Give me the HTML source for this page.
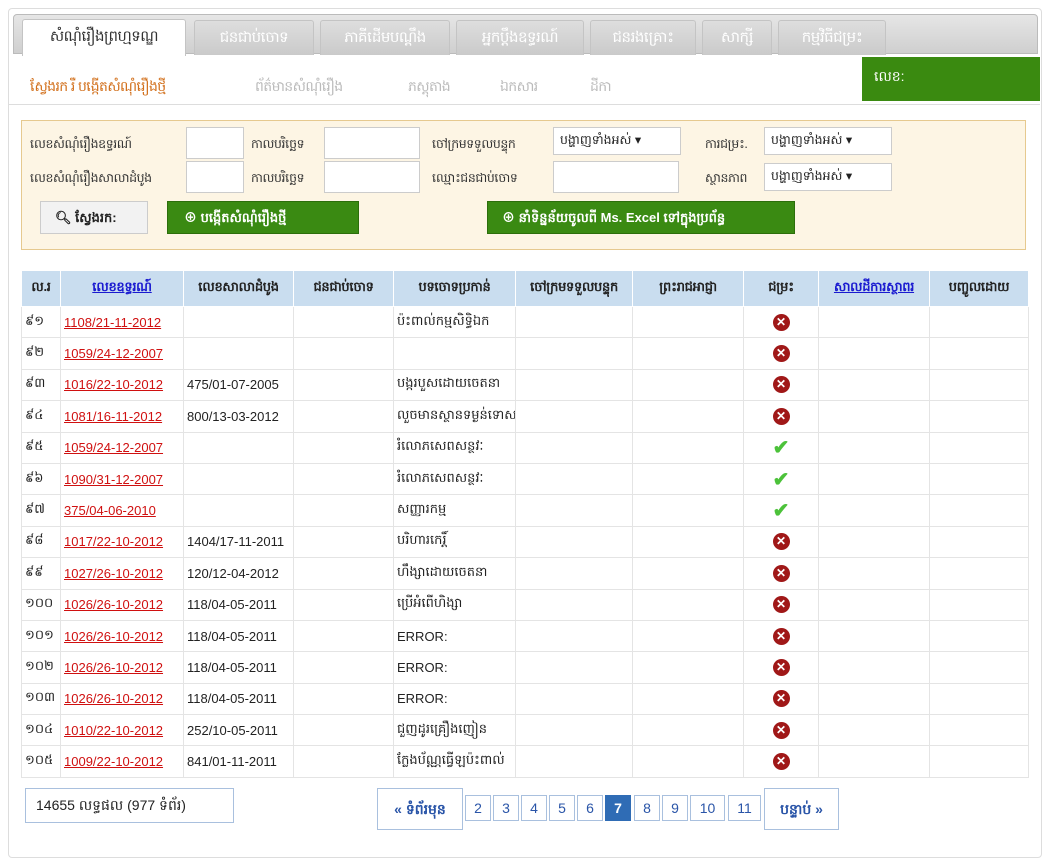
<!DOCTYPE html>
<html><head><meta charset="utf-8"><style>
*{box-sizing:border-box;margin:0;padding:0}
body{width:1046px;height:842px;background:#fff;font-family:"Liberation Sans","Noto Sans CJK SC",sans-serif;font-size:13px;color:#222;position:relative;overflow:hidden}
.abs{position:absolute}
.frame{left:8px;top:8px;width:1034px;height:850px;border:1px solid #ddd;border-radius:4px}
.tabbar{left:13px;top:14px;width:1025px;height:40px;background:linear-gradient(#e6e6e6,#cfcfcf);border:1px solid #bbb;border-radius:4px 4px 0 0}
.tab{position:absolute;top:5px;height:35px;background:linear-gradient(#dedede,#cacaca);border:1px solid #c4c4c4;border-bottom:none;color:#fff;font-size:15px;line-height:33px;text-align:center;border-radius:3px 3px 0 0;letter-spacing:-0.5px}
.tab.on{background:#fff;color:#333;top:4px;height:37px}
.sub{top:77px;font-size:14px;color:#bbb;letter-spacing:-0.6px;white-space:nowrap}
.green{left:862px;top:57px;width:178px;height:44px;background:#3a8a10;color:#fff;padding:10px 12px;font-size:14px}
.filter{left:21px;top:120px;width:1005px;height:130px;background:#fdf5e4;border:1px solid #e6c98f}
.lbl{font-size:12.5px;color:#333;letter-spacing:-0.4px;white-space:nowrap}
.in{background:#fff;border:1px solid #ccc;height:32px}
.sel{background:#fff;border:1px solid #ccc;height:28px;font-size:12.5px;padding:4px 6px;white-space:nowrap}
.btn{height:33px;background:#3a8a12;border:1px solid #2c6e0b;color:#fff;font-size:13px;font-weight:bold;line-height:31px;white-space:nowrap}
table{position:absolute;left:21px;top:270px;border-collapse:collapse;table-layout:fixed;width:1007px}
th{background:#c9ddef;height:36px;font-size:13px;border:1px solid #fff;font-weight:bold;color:#222;letter-spacing:-0.3px}
th a{color:#1a1ad0}
td{height:31.4px;border:1px solid #e4e4e4;font-size:13px;white-space:nowrap;overflow:hidden;padding:0 3px}
td a{color:#d01010;text-decoration:underline}
.x{display:inline-block;width:17px;height:17px;border-radius:50%;background:#a01818;color:#fff;font-size:12px;line-height:17px;font-weight:bold;text-align:center}
.ok{color:#4cc23a;font-size:20px;font-weight:bold}
.pg{position:absolute;top:795px;height:26px;border:1px solid #a9c0de;color:#2a55a8;font-size:14px;text-align:center;line-height:24px}
</style></head><body>
<div class="abs frame"></div>
<div class="abs tabbar">
<div class="tab on" style="left:8px;width:164px">សំណុំរឿងព្រហ្មទណ្ឌ</div>
<div class="tab" style="left:180px;width:120px">ជនជាប់ចោទ</div>
<div class="tab" style="left:306px;width:130px">ភាគីដើមបណ្តឹង</div>
<div class="tab" style="left:442px;width:128px">អ្នកប្តឹងឧទ្ធរណ៍</div>
<div class="tab" style="left:576px;width:106px">ជនរងគ្រោះ</div>
<div class="tab" style="left:688px;width:70px">សាក្សី</div>
<div class="tab" style="left:764px;width:108px">កម្មវិធីជម្រះ</div>
</div>
<div class="abs sub" style="left:30px;color:#d2701c">ស្វែងរក រឺ បង្កើតសំណុំរឿងថ្មី</div>
<div class="abs sub" style="left:255px">ព័ត៌មានសំណុំរឿង</div>
<div class="abs sub" style="left:408px">ភស្តុតាង</div>
<div class="abs sub" style="left:500px">ឯកសារ</div>
<div class="abs sub" style="left:590px">ដីកា</div>
<div class="abs" style="left:8px;top:104px;width:1032px;border-top:1px solid #ddd"></div>
<div class="abs green">លេខ:</div>
<div class="abs filter">
<div class="abs lbl" style="left:8px;top:16px">លេខសំណុំរឿងឧទ្ធរណ៍</div>
<div class="abs in" style="left:164px;top:6px;width:58px"></div>
<div class="abs lbl" style="left:229px;top:16px">កាលបរិច្ឆេទ</div>
<div class="abs in" style="left:302px;top:6px;width:96px"></div>
<div class="abs lbl" style="left:410px;top:16px">ចៅក្រមទទួលបន្ទុក</div>
<div class="abs sel" style="left:531px;top:6px;width:128px">បង្ហាញទាំងអស់ ▾</div>
<div class="abs lbl" style="left:683px;top:16px">ការជម្រះ.</div>
<div class="abs sel" style="left:742px;top:6px;width:128px">បង្ហាញទាំងអស់ ▾</div>
<div class="abs lbl" style="left:8px;top:50px">លេខសំណុំរឿងសាលាដំបូង</div>
<div class="abs in" style="left:164px;top:40px;width:58px"></div>
<div class="abs lbl" style="left:229px;top:50px">កាលបរិច្ឆេទ</div>
<div class="abs in" style="left:302px;top:40px;width:96px"></div>
<div class="abs lbl" style="left:410px;top:50px">ឈ្មោះជនជាប់ចោទ</div>
<div class="abs in" style="left:531px;top:40px;width:126px"></div>
<div class="abs lbl" style="left:683px;top:50px">ស្ថានភាព</div>
<div class="abs sel" style="left:742px;top:42px;width:128px">បង្ហាញទាំងអស់ ▾</div>
<div class="abs" style="left:18px;top:80px;width:108px;height:33px;background:#f2f2f2;border:1px solid #ccc;line-height:31px;padding-left:14px;font-size:13px;font-weight:bold">&#x1F50D;&#xFE0E; ស្វែងរក:</div>
<div class="abs btn" style="left:145px;top:80px;width:192px;padding-left:16px">⊕ បង្កើតសំណុំរឿងថ្មី</div>
<div class="abs btn" style="left:465px;top:80px;width:308px;padding-left:14px">⊕ នាំទិន្នន័យចូលពី Ms. Excel ទៅក្នុងប្រព័ន្ធ</div>
</div>
<table>
<colgroup><col style="width:39px"><col style="width:123px"><col style="width:110px"><col style="width:100px"><col style="width:122px"><col style="width:117px"><col style="width:111px"><col style="width:75px"><col style="width:111px"><col style="width:99px"></colgroup>
<tr><th>ល.រ</th><th><a href="#">លេខឧទ្ធរណ៍</a></th><th>លេខសាលាដំបូង</th><th>ជនជាប់ចោទ</th><th>បទចោទប្រកាន់</th><th>ចៅក្រមទទួលបន្ទុក</th><th>ព្រះរាជអាជ្ញា</th><th>ជម្រះ</th><th><a href="#">សាលដីការស្ថាពរ</a></th><th>បញ្ចូលដោយ</th></tr>
<tr><td>៩១</td><td><a>1108/21-11-2012</a></td><td></td><td></td><td>ប៉ះពាល់កម្មសិទ្ធិឯក</td><td></td><td></td><td align=center><span class="x">✕</span></td><td></td><td></td></tr>
<tr><td>៩២</td><td><a>1059/24-12-2007</a></td><td></td><td></td><td></td><td></td><td></td><td align=center><span class="x">✕</span></td><td></td><td></td></tr>
<tr><td>៩៣</td><td><a>1016/22-10-2012</a></td><td>475/01-07-2005</td><td></td><td>បង្ករបួសដោយចេតនា</td><td></td><td></td><td align=center><span class="x">✕</span></td><td></td><td></td></tr>
<tr><td>៩៤</td><td><a>1081/16-11-2012</a></td><td>800/13-03-2012</td><td></td><td>លួចមានស្ថានទម្ងន់ទោស</td><td></td><td></td><td align=center><span class="x">✕</span></td><td></td><td></td></tr>
<tr><td>៩៥</td><td><a>1059/24-12-2007</a></td><td></td><td></td><td>រំលោភសេពសន្ថវៈ</td><td></td><td></td><td align=center><span class="ok">✔</span></td><td></td><td></td></tr>
<tr><td>៩៦</td><td><a>1090/31-12-2007</a></td><td></td><td></td><td>រំលោភសេពសន្ថវៈ</td><td></td><td></td><td align=center><span class="ok">✔</span></td><td></td><td></td></tr>
<tr><td>៩៧</td><td><a>375/04-06-2010</a></td><td></td><td></td><td>សញ្ញារកម្ម</td><td></td><td></td><td align=center><span class="ok">✔</span></td><td></td><td></td></tr>
<tr><td>៩៨</td><td><a>1017/22-10-2012</a></td><td>1404/17-11-2011</td><td></td><td>បរិហារកេរ្តិ៍</td><td></td><td></td><td align=center><span class="x">✕</span></td><td></td><td></td></tr>
<tr><td>៩៩</td><td><a>1027/26-10-2012</a></td><td>120/12-04-2012</td><td></td><td>ហឹង្សាដោយចេតនា</td><td></td><td></td><td align=center><span class="x">✕</span></td><td></td><td></td></tr>
<tr><td>១០០</td><td><a>1026/26-10-2012</a></td><td>118/04-05-2011</td><td></td><td>ប្រើអំពើហិង្សា</td><td></td><td></td><td align=center><span class="x">✕</span></td><td></td><td></td></tr>
<tr><td>១០១</td><td><a>1026/26-10-2012</a></td><td>118/04-05-2011</td><td></td><td>ERROR:</td><td></td><td></td><td align=center><span class="x">✕</span></td><td></td><td></td></tr>
<tr><td>១០២</td><td><a>1026/26-10-2012</a></td><td>118/04-05-2011</td><td></td><td>ERROR:</td><td></td><td></td><td align=center><span class="x">✕</span></td><td></td><td></td></tr>
<tr><td>១០៣</td><td><a>1026/26-10-2012</a></td><td>118/04-05-2011</td><td></td><td>ERROR:</td><td></td><td></td><td align=center><span class="x">✕</span></td><td></td><td></td></tr>
<tr><td>១០៤</td><td><a>1010/22-10-2012</a></td><td>252/10-05-2011</td><td></td><td>ជួញដូរគ្រឿងញៀន</td><td></td><td></td><td align=center><span class="x">✕</span></td><td></td><td></td></tr>
<tr><td>១០៥</td><td><a>1009/22-10-2012</a></td><td>841/01-11-2011</td><td></td><td>ក្លែងប័ណ្ណធ្វើឡប៉ះពាល់</td><td></td><td></td><td align=center><span class="x">✕</span></td><td></td><td></td></tr>
</table>
<div class="abs" style="left:25px;top:788px;width:209px;height:35px;border:1px solid #a9c0de;font-size:14px;line-height:33px;padding-left:10px">14655 លទ្ធផល (977 ទំព័រ)</div>
<div class="pg" style="left:377px;top:788px;width:86px;height:42px;line-height:40px;font-weight:bold">« ទំព័រមុន</div>
<div class="pg" style="left:465px;width:26px">2</div>
<div class="pg" style="left:493px;width:26px">3</div>
<div class="pg" style="left:521px;width:26px">4</div>
<div class="pg" style="left:549px;width:26px">5</div>
<div class="pg" style="left:577px;width:26px">6</div>
<div class="pg" style="left:605px;width:26px;background:#2f6cb5;color:#fff;font-weight:bold;border-color:#2f6cb5">7</div>
<div class="pg" style="left:634px;width:26px">8</div>
<div class="pg" style="left:662px;width:26px">9</div>
<div class="pg" style="left:690px;width:35px">10</div>
<div class="pg" style="left:728px;width:33px">11</div>
<div class="pg" style="left:764px;top:788px;width:75px;height:42px;line-height:40px;font-weight:bold">បន្ទាប់ »</div>
</body></html>
